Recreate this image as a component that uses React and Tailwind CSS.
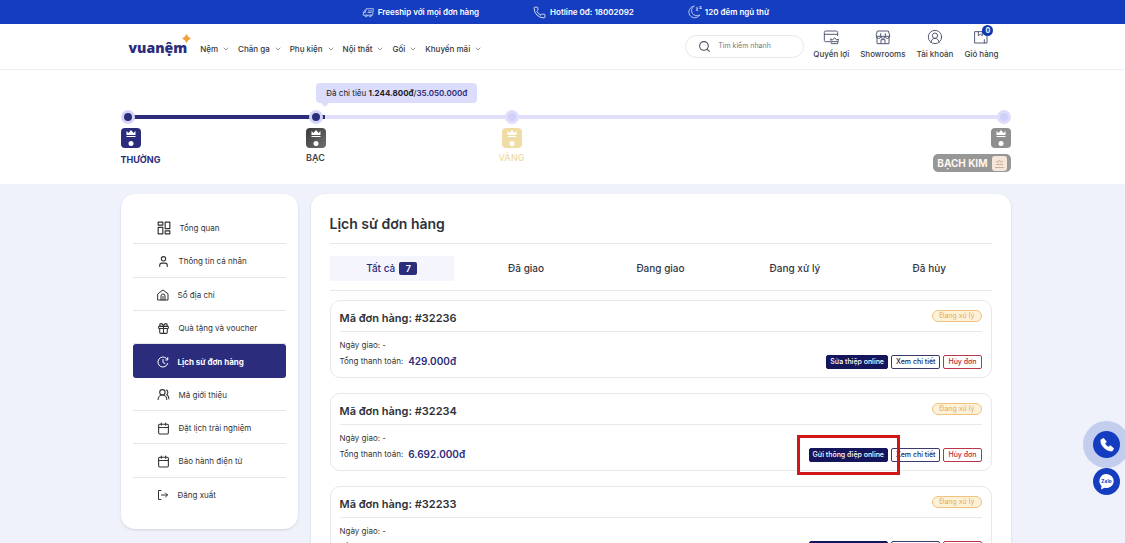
import React from 'react'
import { ChevronDown, CircleUserRound, Phone, Search, Store, User, Gift, UsersRound, Calendar } from 'lucide-react'

const NAV = ['Nệm', 'Chăn ga', 'Phụ kiện', 'Nội thất', 'Gối', 'Khuyến mãi']
const TABS = ['Tất cả', 'Đã giao', 'Đang giao', 'Đang xử lý', 'Đã hủy']
const ORDERS = [
  { id: '32236', total: '429.000đ', action: 'Sửa thiệp online' },
  { id: '32234', total: '6.692.000đ', action: 'Gửi thông điệp online', marked: true },
  { id: '32233', total: '6.692.000đ', action: 'Gửi thông điệp online' },
]

function Svg({ size = 12, children, className, strokeWidth = 2 }) {
  return (
    <svg
      width={size}
      height={size}
      viewBox="0 0 24 24"
      fill="none"
      stroke="currentColor"
      strokeWidth={strokeWidth}
      strokeLinecap="round"
      strokeLinejoin="round"
      className={className}
      aria-hidden="true"
    >
      {children}
    </svg>
  )
}

const TruckIcon = () => (
  <Svg size={13} strokeWidth={1.5} className="opacity-80">
    <path d="M8 5h13l-1.500 12h-2M12 17h-2M5 17H2l1-6 3-4h2" />
    <path d="M7 8l-1 4H3M12 9h6M11 12h6" />
    <circle cx="7.500" cy="18" r="2" />
    <circle cx="15" cy="18" r="2" />
  </Svg>
)

const MoonIcon = () => (
  <Svg size={14} strokeWidth={1.5} className="opacity-80">
    <path d="M10 2a10 10 0 1 0 10 15A9 9 0 0 1 10 2z" />
    <path d="M14 5h3l-3 4h3M20 3h3l-3 3h3" />
  </Svg>
)

const CardIcon = () => (
  <Svg size={16} strokeWidth={1.5}>
    <path d="M10 19H4a2 2 0 0 1-2-2V5a2 2 0 0 1 2-2h16a2 2 0 0 1 2 2v5M2 8h20" />
    <path d="M12 15l2.500 1.500L17.500 13l3 3.500L23 15l-1 7h-9zM13 19h9" />
  </Svg>
)

const StoreIcon = () => (
  <Svg size={16} strokeWidth={1.5}>
    <path d="M4 3h16l2 6v2H2V9zM3 11v11h18V11M9 22v-6h6v6" />
    <path d="M2 11a3 3 0 0 0 6.500 0 3.500 3 0 0 0 7 0 3 3 0 0 0 6.500 0M8.500 11V7M15.500 11V7" />
  </Svg>
)

const BagIcon = () => (
  <Svg size={16} strokeWidth={1.5}>
    <path d="M3 4h18v17H3zM8 4v6l3-2 3 2V4M17 16v5" />
  </Svg>
)

const DashboardIcon = () => (
  <Svg size={14}>
    <rect x="2" y="2" width="8" height="5" />
    <rect x="2" y="11" width="8" height="11" />
    <rect x="14" y="2" width="8" height="11" />
    <rect x="14" y="17" width="8" height="5" />
  </Svg>
)

const HomeIcon = () => (
  <Svg>
    <path d="M2 9.500 12 2l10 7.500V22H2z" />
    <path d="M8 22v-8a4 4 0 0 1 8 0v8M12 15v7" />
  </Svg>
)

const HistoryIcon = () => (
  <Svg>
    <path d="M21.500 15A10 10 0 1 1 19 5l2 2" />
    <path d="M21.500 3v5h-4M12 7v6l4 2" />
  </Svg>
)

const LogoutIcon = () => (
  <Svg>
    <path d="M8 3H3v18h5M9 12h12M17 8l4 4-4 4" />
  </Svg>
)

const MENU = [
  { label: 'Tổng quan', icon: <DashboardIcon /> },
  { label: 'Thông tin cá nhân', icon: <User size={13} /> },
  { label: 'Sổ địa chỉ', icon: <HomeIcon /> },
  { label: 'Quà tặng và voucher', icon: <Gift size={13} /> },
  { label: 'Lịch sử đơn hàng', icon: <HistoryIcon />, active: true },
  { label: 'Mã giới thiệu', icon: <UsersRound size={13} /> },
  { label: 'Đặt lịch trải nghiệm', icon: <Calendar size={13} /> },
  { label: 'Bảo hành điện tử', icon: <Calendar size={13} /> },
  { label: 'Đăng xuất', icon: <LogoutIcon /> },
]

const SHORTCUTS = [
  { label: 'Quyền lợi', icon: <CardIcon /> },
  { label: 'Showrooms', icon: <StoreIcon /> },
  { label: 'Tài khoản', icon: <CircleUserRound size={16} strokeWidth={1.5} /> },
  { label: 'Giỏ hàng', icon: <BagIcon />, count: 0 },
]

function TopBar() {
  return (
    <div className="h-6 bg-[#153dbf] pl-1.5 flex items-center justify-center gap-[54px] text-[8px] font-semibold text-white">
      <span className="flex items-center gap-[3px]"><TruckIcon />Freeship với mọi đơn hàng</span>
      <a href="tel:18002092" className="flex items-center gap-1"><Phone size={13} strokeWidth={1.5} />Hotline 0đ: 18002092</a>
      <span className="flex items-center gap-[3px]"><MoonIcon />120 đêm ngủ thử</span>
    </div>
  )
}

function Header() {
  return (
    <header className="h-[46px] bg-white border-b border-[#eceef4] shadow-sm pl-1.5">
      <div className="max-w-[874px] h-full mx-auto flex items-center">
        <a href="#" className="relative mt-0.5 font-['Open_Sans',sans-serif] text-[14px] leading-5 font-extrabold text-[#2c2c7c]">
          vuanệm
          <svg width="9" height="9" viewBox="0 0 10 10" className="absolute -right-1 -top-1" aria-hidden="true">
            <path d="M5 0 7 3 10 5 7 7 5 10 3 7 0 5 3 3z" fill="#f0a03c" />
          </svg>
        </a>
        <nav className="ml-[13px] mt-1 flex items-center gap-2 text-[8px] font-medium text-[#33363f]">
          {NAV.map(item => (
            <a key={item} href="#" className="flex items-center gap-1 whitespace-nowrap">
              {item}
              <ChevronDown size={8} className="text-[#666]" />
            </a>
          ))}
        </nav>
        <label className="ml-auto w-[119px] h-[23px] flex items-center gap-[7px] rounded-full border border-[#e6e8ee] pl-3">
          <Search size={13} className="shrink-0 text-[#4b5060]" />
          <input
            type="search"
            aria-label="Tìm kiếm nhanh"
            placeholder="Tìm kiếm nhanh"
            className="w-full min-w-0 bg-transparent text-[7px] outline-none placeholder:text-[#777]"
          />
        </label>
        <div className="ml-[9px] mr-1 pb-1 flex gap-[11px] text-[8px] leading-3 font-medium text-[#3a3d46]">
          {SHORTCUTS.map(s => (
            <a key={s.label} href="#" className="flex flex-col items-center gap-[3px] whitespace-nowrap">
              <span className="relative text-[#565d75]">
                {s.icon}
                {s.count !== undefined && (
                  <span className="absolute -top-1 -right-1 size-[11px] rounded-full bg-[#1238b4] text-white text-[7px] leading-[11px] font-bold text-center">
                    {s.count}
                  </span>
                )}
              </span>
              {s.label}
            </a>
          ))}
        </div>
      </div>
    </header>
  )
}

function Badge({ className }) {
  return (
    <span className={`size-5 rounded-[4px] flex items-center justify-center ${className}`}>
      <svg width="20" height="20" viewBox="0 0 20 20" fill="#fff" aria-hidden="true">
        <path d="M5.500 3 7.500 5 10 2l2.500 3 2-2v4h-9zM5.500 8h9v1h-9z" />
        <circle cx="10" cy="15.500" r="2.500" />
      </svg>
    </span>
  )
}

function Dot({ reached }) {
  return (
    <span className={`relative size-[14px] rounded-full border-[3px] ${reached ? 'border-[#d5d5fa] bg-[#2c2c7c]' : 'border-[#dedefb] bg-[#d0d0f9]'}`} />
  )
}

function Progress() {
  return (
    <section className="h-[114px] bg-white pl-1.5">
      <div className="max-w-[890px] mx-auto pt-10 relative">
        <div className="absolute left-[22%] top-[13px] h-5 px-[10px] rounded-[4px] bg-[#dcdcfb] text-[8px] leading-5 text-[#222]">
          Đã chi tiêu <b>1.244.800đ</b>/<b className="font-semibold text-[#2c2c7c]">35.050.000đ</b>
          <span className="absolute left-[5px] top-full border-x-4 border-t-4 border-x-transparent border-t-[#dcdcfb]" />
        </div>
        <div className="absolute inset-x-2 top-[45px] h-1 bg-[#e0e0fa]">
          <div className="h-full w-[22.5%] bg-[#2c2c7c]" />
        </div>
        <div className="grid grid-cols-[185fr_192fr_513fr] text-[9px] leading-3 font-semibold">
          <div className="flex flex-col items-start gap-1">
            <Dot reached />
            <Badge className="bg-[#2c2c7c]" />
            <span className="pt-0.5 text-[#2c2c7c] font-bold">THƯỜNG</span>
          </div>
          <div className="w-5 flex flex-col items-center gap-1">
            <Dot reached />
            <Badge className="bg-linear-to-br from-[#3a3a3a] to-[#707070]" />
            <span className="text-[#444]">BẠC</span>
          </div>
          <div className="flex justify-between">
            <div className="w-7 flex flex-col items-center gap-1">
              <Dot />
              <Badge className="bg-[#efdda5]" />
              <span className="text-[#efdfae]">VÀNG</span>
            </div>
            <div className="flex flex-col items-end gap-1">
              <Dot />
              <Badge className="bg-[#8f8f8f]" />
              <span className="mt-0.5 h-[18px] flex items-center gap-1 rounded-[5px] bg-[#979797] px-1 text-[10px] text-[#fdf6ee] font-bold">
                BẠCH KIM
                <span className="size-[15px] rounded-[3px] bg-[#f6e6da] flex items-center justify-center">
                  <svg width="11" height="11" viewBox="0 0 11 11" fill="none" stroke="#c9b09c" aria-hidden="true">
                    <path d="M1 9.500h9M2 6.500h7M2 3l2 1.500L5.500 2 7 4.500 9 3" />
                  </svg>
                </span>
              </span>
            </div>
          </div>
        </div>
      </div>
    </section>
  )
}

function Sidebar() {
  return (
    <aside className="w-[177px] shrink-0 rounded-[14px] bg-white px-3 pt-[17px] pb-[18px] shadow-sm">
      <ul className="h-[300px] grid auto-rows-fr text-[8px] text-[#333]">
        {MENU.map((item, i) => (
          <li key={item.label} className={i === MENU.length - 1 || item.active ? '' : 'border-b border-[#e6e6ea]'}>
            <a
              href="#"
              className={`h-full pt-0.5 flex items-center gap-[9px] pl-6 ${item.active ? 'rounded-[3px] bg-[#2c2c7c] font-bold text-white' : ''}`}
            >
              {item.icon}
              {item.label}
            </a>
          </li>
        ))}
      </ul>
    </aside>
  )
}

function OrderCard({ order }) {
  return (
    <article className="rounded-[10px] border border-[#e8e9ef] px-[9px] pb-2">
      <div className="h-[31px] flex items-center justify-between border-b border-[#e8e9ef]">
        <h2 className="pt-1 text-[11px] font-semibold text-[#2e3138]">Mã đơn hàng: #{order.id}</h2>
        <span className="h-3 flex items-center rounded-full border border-[#efc27e] bg-[#fdf1d8] px-1.5 text-[7px] text-[#e5ab5c]">Đang xử lý</span>
      </div>
      <div className="pt-[5px] flex items-end justify-between text-[8px] leading-4 text-[#333]">
        <div>
          <p>Ngày giao: -</p>
          <p className="flex gap-[5px]">Tổng thanh toán: <b className="text-[10px] font-semibold text-[#2c2c7c]">{order.total}</b></p>
        </div>
        <div className="flex gap-[3px] text-[7px] leading-3 font-medium">
          <span className="relative">
            <button className="block rounded-[2px] border border-[#15155c] bg-[#15155c] px-[3px] text-white">{order.action}</button>
            {order.marked && <span className="absolute z-10 -inset-x-3 -inset-y-[13px] border-3 border-[#cf1717] pointer-events-none" />}
          </span>
          <button className="rounded-[2px] border border-[#3a3a6c] px-1 text-[#24244f]">Xem chi tiết</button>
          <button className="rounded-[2px] border border-[#b8374a] px-1 text-[#b8273c]">Hủy đơn</button>
        </div>
      </div>
    </article>
  )
}

function Orders() {
  return (
    <main className="flex-1 min-w-0 rounded-[14px] bg-white px-[19px] pb-5 shadow-sm">
      <h1 className="h-[50px] pt-2.5 flex items-center border-b border-[#e8e9ef] text-[14px] font-semibold text-[#2e3138]">Lịch sử đơn hàng</h1>
      <div role="tablist" className="grid grid-cols-5 gap-[10px] pt-3 pb-[9px] border-b border-[#e8e9ef] text-[10px] font-medium text-[#33363f]">
        {TABS.map((tab, i) => (
          <button
            key={tab}
            role="tab"
            aria-selected={i === 0}
            className={`h-[25px] flex items-center justify-center gap-1 ${i === 0 ? 'bg-[#f5f6fd] text-[#2c2c7c]' : ''}`}
          >
            {tab}
            {i === 0 && <span className="w-[18px] h-[13px] rounded-[2px] bg-[#2c2c7c] text-white text-[9px] leading-[13px] font-semibold">7</span>}
          </button>
        ))}
      </div>
      <div className="pt-[9px] flex flex-col gap-[15px]">
        {ORDERS.map(order => <OrderCard key={order.id} order={order} />)}
      </div>
    </main>
  )
}

function FloatingContacts() {
  return (
    <div className="fixed right-[5px] bottom-12 z-20 flex flex-col gap-[10px]">
      <a href="tel:18002092" aria-label="Gọi hotline" className="relative size-[27px] rounded-full bg-[#153dbf] flex items-center justify-center">
        <span className="absolute -inset-[10px] rounded-full bg-[#153dbf]/20" />
        <svg width="16" height="16" viewBox="0 0 24 24" fill="#fff" className="relative" aria-hidden="true">
          <path d="M7 2 3 4c-2 8 8 18 17 17l2-4-5-4-3 2c-2-1-4-3-5-5l2-3z" stroke="#fff" strokeLinejoin="round" />
        </svg>
      </a>
      <a href="#" aria-label="Chat Zalo" className="relative size-[27px] rounded-full bg-[#153dbf] flex items-center justify-center">
        <svg width="17" height="17" viewBox="0 0 17 17" fill="#fff" className="absolute" aria-hidden="true">
          <path d="M8.500 1a7.500 7 0 1 1-2 13.800L3 16.500l.5-3.500A7 7 0 0 1 8.500 1z" />
        </svg>
        <span className="relative text-[5px] font-bold text-[#153dbf]">Zalo</span>
      </a>
    </div>
  )
}

export default function App() {
  return (
    <div className="h-screen overflow-hidden bg-[#eff2fb] font-['Inter',sans-serif]">
      <TopBar />
      <Header />
      <Progress />
      <div className="pl-1.5">
        <div className="max-w-[890px] mx-auto pt-[10px] flex items-start gap-[13px]">
          <Sidebar />
          <Orders />
        </div>
      </div>
      <FloatingContacts />
    </div>
  )
}
